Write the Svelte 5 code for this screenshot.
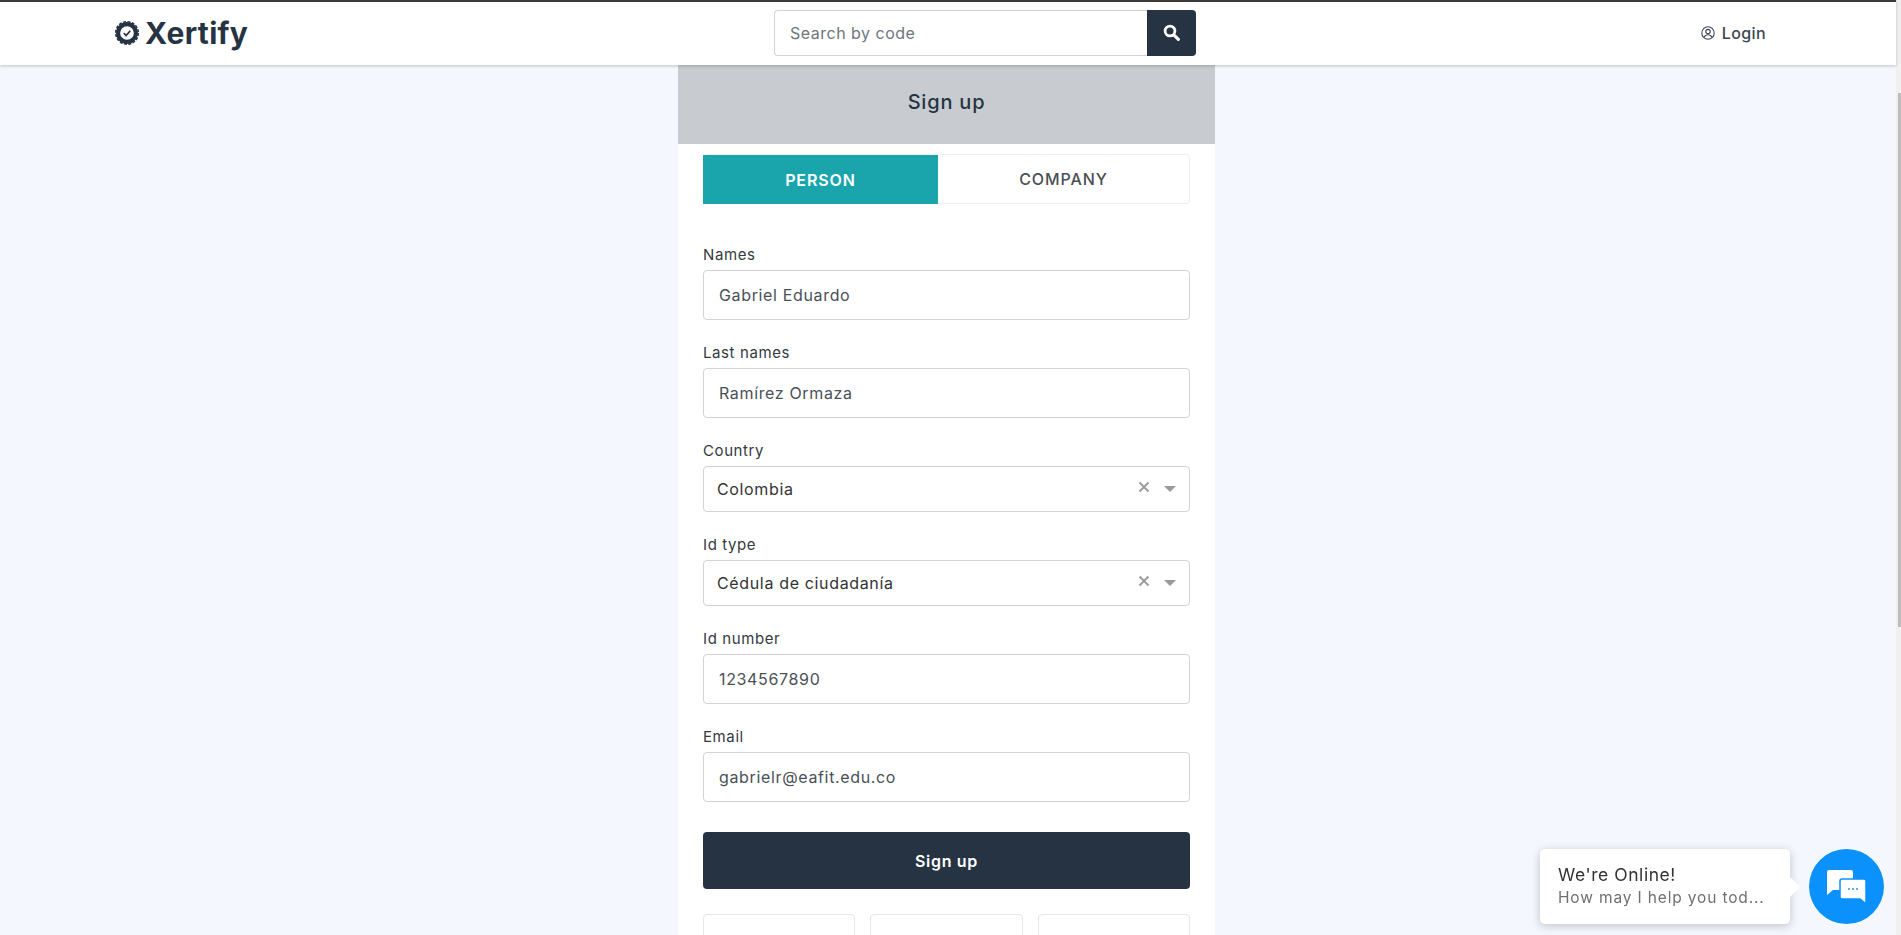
<script>
  const fields = [
    { label: "Names", value: "Gabriel Eduardo" },
    { label: "Last names", value: "Ramírez Ormaza" },
    { label: "Country", value: "Colombia", select: true },
    { label: "Id type", value: "Cédula de ciudadanía", select: true },
    { label: "Id number", value: "1234567890" },
    { label: "Email", value: "gabrielr@eafit.edu.co" },
  ];
</script>

<div class="page">
  <div class="main">
    <header class="topbar">
      <div class="logo">
        <svg viewBox="0 0 28 28" width="26" height="26" aria-hidden="true">
          <circle cx="14" cy="14" r="9.6" fill="none" stroke="#253343" stroke-width="4.4" />
          <circle cx="14" cy="14" r="12.2" fill="none" stroke="#253343" stroke-width="1.6" stroke-dasharray="3.2 1.600" />
          <path d="M10.5 14.2l2.500 2.500 4.500-5" fill="none" stroke="#253343" stroke-width="1.800" />
        </svg>
        <span>Xertify</span>
      </div>
      <div class="search">
        <input placeholder="Search by code" />
        <button aria-label="Search">
          <svg viewBox="0 0 16 16" width="17" height="17">
            <circle cx="6.600" cy="6.600" r="4.600" fill="none" stroke="#fff" stroke-width="2.600" />
            <path d="M10.200 10.200l4.200 4.200" stroke="#fff" stroke-width="3" stroke-linecap="round" />
          </svg>
        </button>
      </div>
      <div class="login">
        <svg viewBox="0 0 14 14" width="14" height="14" aria-hidden="true">
          <circle cx="7" cy="7" r="6.200" fill="none" stroke="#3c4650" stroke-width="1.100" />
          <circle cx="7" cy="5.600" r="2.200" fill="none" stroke="#3c4650" stroke-width="1.100" />
          <path d="M3.200 11.200c.7-1.800 2.100-2.500 3.800-2.500s3.100.7 3.800 2.500" fill="none" stroke="#3c4650" stroke-width="1.100" />
        </svg>
        <span>Login</span>
      </div>
    </header>

    <main class="panel">
      <h1>Sign up</h1>
      <div class="body">
        <div class="tabs">
          <div class="tab active">PERSON</div>
          <div class="tab">COMPANY</div>
        </div>

        <form class="form">
          {#each fields as f}
            <div class="field">
              <div class="label">{f.label}</div>
              {#if f.select}
                <div class="select">
                  <span>{f.value}</span>
                  <svg class="clear" viewBox="0 0 12 12" width="12" height="12" aria-hidden="true">
                    <path d="M1.500 1.500l9 9M10.500 1.500l-9 9" stroke="#999" stroke-width="1.800" />
                  </svg>
                  <span class="caret"></span>
                </div>
              {:else}
                <div class="input">{f.value}</div>
              {/if}
            </div>
          {/each}
        </form>

        <button class="submit">Sign up</button>

        <div class="socials">
          <div class="social"></div>
          <div class="social"></div>
          <div class="social"></div>
        </div>
      </div>
    </main>
  </div>

  <div class="scrollbar"><div class="thumb"></div></div>

  <div class="chat">
    <div class="bubble">
      <div class="hello">We're Online!</div>
      <div class="help">How may I help you tod...</div>
    </div>
    <div class="fab">
      <svg viewBox="0 0 39 34" width="39" height="34" aria-hidden="true">
        <path d="M0 2a2 2 0 0 1 2-2h22a2 2 0 0 1 2 2v16a2 2 0 0 1-2 2H6l-6 5z" fill="#fff" />
        <path d="M15 9h22a2 2 0 0 1 2 2v23l-6-5H15a2 2 0 0 1-2-2V11a2 2 0 0 1 2-2z" fill="#fff" stroke="#0a91fb" stroke-width="1.500" />
        <circle cx="22" cy="19" r="0.900" fill="#0a91fb" />
        <circle cx="26" cy="19" r="0.900" fill="#0a91fb" />
        <circle cx="30" cy="19" r="0.900" fill="#0a91fb" />
      </svg>
    </div>
  </div>
</div>

<style>
  :global(body) {
    margin: 0;
    background: #f4f8fe;
    overflow: hidden;
  }
  .page {
    display: flex;
    height: 935px;
    overflow: hidden;
    font-family: "Inter", "Open Sans", sans-serif;
    color: #3c4650;
  }
  .main {
    flex: 1;
    min-width: 0;
  }
  .scrollbar {
    width: 5px;
    box-sizing: border-box;
    background: #f0f0f0;
    padding: 93px 0 0 2px;
  }
  .thumb {
    height: 534px;
    background: #bcbcbc;
  }
  .topbar {
    height: 61px;
    padding-bottom: 2px;
    border-top: 2px solid #3b3b3b;
    background: #fff;
    box-shadow: 0 1px 3px rgba(0, 0, 0, 0.22);
    display: grid;
    grid-template-columns: 774px 422px 1fr;
    align-items: center;
    position: relative;
  }
  .logo {
    display: flex;
    align-items: center;
    gap: 5px;
    padding-left: 114px;
    font-size: 30px;
    font-weight: 700;
    letter-spacing: 0.3px;
    color: #253343;
  }
  .search {
    display: flex;
    height: 46px;
  }
  .search input {
    flex: 1;
    min-width: 0;
    box-sizing: border-box;
    border: 1px solid #ced4da;
    border-right: 0;
    border-radius: 4px 0 0 4px;
    padding: 0 15px;
    font: 16px "Inter", sans-serif;
    letter-spacing: 0.5px;
  }
  .search input::placeholder {
    color: #6c757d;
    opacity: 1;
  }
  .search button {
    width: 49px;
    border: 0;
    padding: 0;
    background: #253343;
    border-radius: 0 4px 4px 0;
    display: flex;
    align-items: center;
    justify-content: center;
  }
  .login {
    justify-self: end;
    padding-right: 130px;
    display: flex;
    align-items: center;
    gap: 7px;
    font-size: 16px;
    font-weight: 500;
    letter-spacing: 0.4px;
  }
  .panel {
    width: 537px;
    margin-left: 678px;
    background: #fff;
  }
  h1 {
    margin: 0;
    height: 74px;
    padding-bottom: 5px;
    background: #c8ccd0;
    display: flex;
    align-items: center;
    justify-content: center;
    font-size: 20px;
    font-weight: 500;
    letter-spacing: 0.8px;
    color: #253343;
  }
  .body {
    padding: 10px 25px 0;
  }
  .tabs {
    display: flex;
    height: 50px;
    box-sizing: border-box;
    border: 1px solid #eceeef;
    border-radius: 4px;
    font-size: 16px;
    font-weight: 500;
    letter-spacing: 0.9px;
  }
  .tab {
    flex: 1;
    display: flex;
    align-items: center;
    justify-content: center;
    color: #4a4f54;
  }
  .tab.active {
    flex: 0 0 235px;
    margin: 0 0 -1px -1px;
    background: #19a5ab;
    color: #fff;
    font-weight: 600;
  }
  .form {
    margin-top: 42px;
    display: flex;
    flex-direction: column;
    gap: 24px;
  }
  .label {
    font-size: 15px;
    line-height: 18px;
    margin-bottom: 6px;
    color: #343a40;
    letter-spacing: 0.6px;
  }
  .input,
  .select {
    box-sizing: border-box;
    border: 1px solid #ced4da;
    border-radius: 4px;
    display: flex;
    align-items: center;
    font-size: 16px;
    letter-spacing: 0.65px;
    color: #495057;
  }
  .input {
    height: 50px;
    padding: 0 15px;
  }
  .select {
    height: 46px;
    padding: 0 13px;
    color: #333;
  }
  .select > span:first-child {
    flex: 1;
  }
  .clear {
    margin: -5px 14px 0 0;
  }
  .caret {
    width: 0;
    height: 0;
    border-left: 6px solid transparent;
    border-right: 6px solid transparent;
    border-top: 6px solid #999;
  }
  .submit {
    display: block;
    width: 100%;
    height: 57px;
    margin-top: 30px;
    border: 0;
    border-radius: 4px;
    background: #253343;
    color: #fff;
    font: 600 16px "Inter", sans-serif;
    letter-spacing: 0.7px;
  }
  .socials {
    display: grid;
    grid-template-columns: repeat(3, 1fr);
    gap: 15px;
    margin-top: 25px;
  }
  .social {
    height: 60px;
    border: 1px solid #e4e6e8;
    border-radius: 4px;
  }
  .chat {
    position: fixed;
    right: 17px;
    bottom: 11px;
    display: flex;
    align-items: center;
    gap: 19px;
  }
  .bubble {
    position: relative;
    box-sizing: border-box;
    width: 250px;
    height: 75px;
    padding: 14px 18px;
    background: #fff;
    border-radius: 5px;
    box-shadow: 0 2px 10px rgba(0, 0, 0, 0.22);
  }
  .bubble::after {
    content: "";
    position: absolute;
    right: -7px;
    top: 31px;
    width: 14px;
    height: 14px;
    background: #fff;
    transform: rotate(45deg);
  }
  .hello {
    font-size: 17.500px;
    line-height: 24px;
    color: #333;
    letter-spacing: 0.55px;
  }
  .help {
    font-size: 15.500px;
    line-height: 22px;
    color: #707070;
    letter-spacing: 0.85px;
    white-space: nowrap;
  }
  .fab {
    width: 75px;
    height: 75px;
    border-radius: 50%;
    background: #0a91fb;
    display: flex;
    align-items: center;
    justify-content: center;
  }
</style>
